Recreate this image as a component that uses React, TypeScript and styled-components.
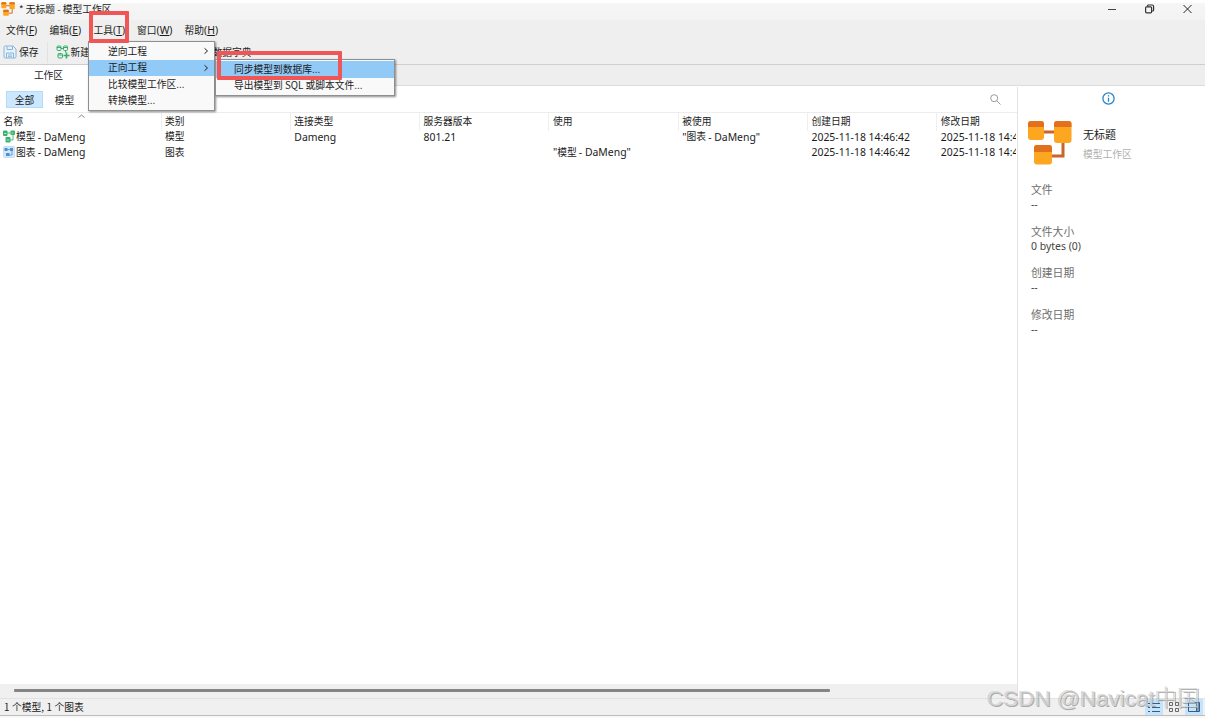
import React from "react";
import styled, { createGlobalStyle } from "styled-components";

const Global = createGlobalStyle`
  * { box-sizing: border-box; }
  html, body { margin: 0; padding: 0; overflow: hidden; background: #fff; }
  body {
    font-family: "Noto Sans CJK SC", "Noto Sans", sans-serif;
    font-size: 9.75px;
    color: #1c1c1c;
    white-space: nowrap;
  }
`;

const Latin = styled.span`
  font-family: "Noto Sans", sans-serif;
  font-size: 1.07em;
  line-height: 1;
`;

/* Sets western runs in the western face, beside the Chinese one. */
function Mixed({ text }: { text: string }) {
  return (
    <>
      {text.split(/([\x21-\x7e][\x20-\x7e]*)/).map((run, i) =>
        i % 2 ? <Latin key={i}>{run}</Latin> : run
      )}
    </>
  );
}

const Window = styled.div`
  position: relative;
  width: 1205px;
  height: 718px;
  display: flex;
  flex-direction: column;
  overflow: hidden;
  background: #fff;
`;

const TitleBar = styled.header`
  flex: none;
  height: 20px;
  padding: 0 0 2px 1px;
  display: flex;
  align-items: center;
  background: linear-gradient(#fff 0, #fff 2px, #f5f5f5 4px, #f3f3f3 100%);
  svg { flex: none; }
`;
const Title = styled.span`
  margin-left: 4px;
  line-height: 18px;
  padding-bottom: 1px;
`;
const WindowButtons = styled.div`
  margin-left: auto;
  height: 18px;
  display: flex;
  align-items: center;
  gap: 27px;
  padding-right: 12px;
`;

const MenuBar = styled.nav`
  flex: none;
  height: 21px;
  padding: 1px 0 0 6px;
  display: flex;
  background: #efefef;
  line-height: 19px;
`;
const MenuName = styled.span<{ $w: number }>`
  width: ${(p) => p.$w}px;
  u { text-underline-offset: 1px; text-decoration-thickness: 1px; }
`;

const Toolbar = styled.div`
  flex: none;
  height: 24px;
  padding: 0 0 1px 3px;
  display: flex;
  align-items: center;
  background: #efefef;
  border-bottom: 1px solid #cfcfcf;
  line-height: 22px;
  svg { flex: none; }
`;
const ToolText = styled.span<{ $gap: number }>`
  margin-left: ${(p) => p.$gap}px;
`;
const ToolDivider = styled.i`
  width: 1px;
  height: 21px;
  margin: 0 8px;
  background: #e2e2e2;
`;

const TabStrip = styled.div`
  flex: none;
  height: 21px;
  background: #eee;
  border-bottom: 1px solid #dcdcdc;
`;
const Tab = styled.div`
  width: 97px;
  height: 21px;
  background: #fff;
  text-align: center;
  line-height: 20px;
`;

const Body = styled.div`
  flex: 1;
  min-height: 0;
  display: flex;
`;
const Main = styled.main`
  width: 1017px;
  display: flex;
  flex-direction: column;
`;
const FilterRow = styled.div`
  flex: none;
  height: 27px;
  padding: 1px 16px 0 6px;
  display: flex;
  align-items: center;
  border-bottom: 1px solid #ededed;
`;
const Filter = styled.span<{ $on?: boolean }>`
  width: ${(p) => (p.$on ? 37 : 43)}px;
  height: 17px;
  line-height: 16px;
  text-align: center;
  border: 1px solid ${(p) => (p.$on ? "#b5dcf7" : "transparent")};
  background: ${(p) => (p.$on ? "#cce8ff" : "transparent")};
`;
const SearchIcon = styled.svg`
  margin-left: auto;
`;

const Table = styled.div`
  flex: 1;
  position: relative;
  overflow: hidden;
  margin-right: 1px;
`;
const Row = styled.div<{ $head?: boolean }>`
  display: grid;
  grid-template-columns: 161.5px repeat(7, 129.3px);
  height: ${(p) => (p.$head ? 16 : 15.5)}px;
  line-height: ${(p) => (p.$head ? 17.5 : 15)}px;
`;
const Cell = styled.div<{ $head?: boolean }>`
  height: 100%;
  padding-left: 3.5px;
  display: flex;
  align-items: center;
  white-space: pre;
  border-right: 1px solid ${(p) => (p.$head ? "#efefef" : "transparent")};
`;
const NameCell = styled(Cell)`
  padding-left: 3px;
  svg { flex: none; margin-right: 1px; }
`;
const SortMark = styled.svg`
  position: absolute;
  left: 78px;
  top: 1px;
`;

const ScrollTrack = styled.div`
  flex: none;
  height: 14px;
  padding: 5px 0 0 14px;
  background: #f0f0f0;
`;
const ScrollThumb = styled.div`
  width: 816px;
  height: 3px;
  border-radius: 1px;
  background: #858585;
`;

const Side = styled.aside`
  flex: 1;
  margin-top: 1px;
  border-left: 1px solid #e3e3e3;
  padding: 5px 0 0 9px;
`;
const InfoIcon = styled.svg`
  display: block;
  margin: 0 0 0 75px;
`;
const Summary = styled.div`
  margin-top: 15px;
  display: flex;
`;
const SummaryText = styled.div`
  margin: 4px 0 0 11px;
`;
const SummaryName = styled.div`
  font-size: 11px;
  line-height: 20px;
  color: #222;
`;
const SummaryKind = styled.div`
  line-height: 20px;
  color: #b0b0b0;
`;
const Details = styled.dl`
  margin: 16px 0 0 4px;
  font-size: 10.8px;
  dt { height: 16px; line-height: 16px; color: #6d6d6d; }
  dd { height: 14px; margin: 0 0 11.6px; line-height: 15px; color: #444; font-size: 9.8px; }
`;

const StatusBar = styled.footer`
  flex: none;
  height: 18px;
  padding: 0 2px 0 4px;
  display: flex;
  align-items: center;
  background: #f0f0f0;
  border-top: 1px solid #e2e2e2;
  border-bottom: 1px solid #bdbdbd;
  line-height: 16px;
`;
const StatusText = styled.span`
  word-spacing: 0.4px;
`;
const BottomEdge = styled.div`
  flex: none;
  height: 2px;
  background: #f8f8f8;
`;
const ViewButtons = styled.div`
  margin-left: auto;
  display: flex;
  gap: 2px;
`;
const ViewButton = styled.span<{ $on?: boolean }>`
  width: 18px;
  height: 16px;
  display: flex;
  align-items: center;
  justify-content: center;
  background: ${(p) => (p.$on ? "#c5e4fb" : "transparent")};
`;

const Popup = styled.div<{ $x: number; $y: number; $w: number }>`
  position: absolute;
  left: ${(p) => p.$x}px;
  top: ${(p) => p.$y}px;
  width: ${(p) => p.$w}px;
  padding: 1px 0;
  background: #f9f9f9;
  border: 1px solid #8f8f8f;
  box-shadow: 1px 1px 2px rgba(0, 0, 0, 0.45);
`;
const PopupItem = styled.div<{ $on?: boolean; $indent: number }>`
  height: 16.5px;
  line-height: 15.5px;
  padding: 0 5px 0 ${(p) => p.$indent}px;
  display: flex;
  align-items: center;
  justify-content: space-between;
  background: ${(p) => (p.$on ? "#91c9f7" : "transparent")};
`;
const Highlight = styled.div<{ $x: number; $y: number; $w: number; $h: number }>`
  position: absolute;
  left: ${(p) => p.$x}px;
  top: ${(p) => p.$y}px;
  width: ${(p) => p.$w}px;
  height: ${(p) => p.$h}px;
  border: 4px solid #f05656;
  border-radius: 1px;
`;
const Watermark = styled.div`
  position: absolute;
  left: 987px;
  top: 685px;
  font-family: "Liberation Sans", "Noto Sans CJK SC", sans-serif;
  font-size: 22.5px;
  font-weight: 300;
  line-height: 27px;
  color: rgba(240, 240, 240, 0.6);
  text-shadow: 1px 1px 0 rgba(100, 100, 100, 0.5), -0.5px -0.5px 0 rgba(120, 120, 120, 0.4);
`;

function WorkspaceLogo({ size }: { size: number }) {
  return (
    <svg width={size} height={size} viewBox="0 0 45 45">
      <path d="M15 12h14M36 22v14H24" fill="none" stroke="#c9652b" strokeWidth="3" />
      <rect x="1" y="1" width="16" height="19" rx="3" fill="#fda61f" />
      <path d="M1 7V4a3 3 0 0 1 3-3h10a3 3 0 0 1 3 3v3z" fill="#e2701c" />
      <rect x="27" y="1" width="17.5" height="22" rx="3" fill="#fda61f" />
      <path d="M27 7V4a3 3 0 0 1 3-3h11.500a3 3 0 0 1 3 3v3z" fill="#e2701c" />
      <rect x="7" y="25" width="18" height="19.500" rx="3" fill="#fda61f" />
      <path d="M7 32v-4a3 3 0 0 1 3-3h12a3 3 0 0 1 3 3v4z" fill="#e2701c" />
    </svg>
  );
}

function ModelIcon() {
  return (
    <svg width="12" height="13" viewBox="0 0 12 13">
      <path d="M4 3h5M10 4v6H6" fill="none" stroke="#4dbb7c" />
      <rect x="0" y="0.500" width="4.500" height="5.500" rx="1" fill="#37b36b" />
      <rect x="7.500" y="0.500" width="4.500" height="4.500" rx="1" fill="#37b36b" />
      <rect x="2.500" y="7" width="5" height="5.500" rx="1" fill="#37b36b" />
      <path d="M1 3.500h2.500M8.500 3h2M3.500 10h3" stroke="#a5e6c1" />
    </svg>
  );
}

function DiagramIcon() {
  return (
    <svg width="12" height="12" viewBox="0 0 12 12">
      <rect x="0.500" y="0.500" width="11" height="11" rx="1" fill="#d3e8fa" stroke="#c5ddf2" />
      <path d="M4 3.500h3M9 4v5H6" fill="none" stroke="#64a1d9" />
      <rect x="1.500" y="2" width="3" height="3" fill="#4a90d0" />
      <rect x="7" y="2" width="3" height="3" fill="#4a90d0" />
      <rect x="3" y="7" width="3.500" height="3" fill="#4a90d0" />
    </svg>
  );
}

function SaveIcon() {
  return (
    <svg width="14" height="14" viewBox="0 0 14 14" fill="none" stroke="#8ab5da">
      <path d="M1 2.200Q1 1 2.200 1H10l3 3v7.800Q13 13 11.800 13H2.200Q1 13 1 11.800z" fill="#e6f2fb" />
      <path d="M4 1v3.500h5.500V1M3.500 13V8h7v5M5 10h4M5 11.700h4" />
    </svg>
  );
}

function NewModelIcon() {
  return (
    <svg width="14" height="14" viewBox="0 0 14 14" fill="none" stroke="#35ae67">
      <rect x="1" y="1" width="4" height="4.500" rx="1" />
      <rect x="7.500" y="1" width="4" height="4.500" rx="1" />
      <rect x="2" y="8.500" width="4.500" height="4.500" rx="1" />
      <path d="M1 2.500h4M7.500 2.500h4M2 10h4.500M5 3.500h2.500M9.500 5.500V7.500" />
      <path d="M10.500 7.500v6M7.500 10.500h6" strokeWidth="1.600" />
    </svg>
  );
}

const Chevron = () => (
  <svg width="6" height="8" viewBox="0 0 6 8" fill="none" stroke="#222">
    <path d="M1.500 1.300L4.500 4L1.500 6.700" />
  </svg>
);

const menus: [string, string, number][] = [
  ["文件", "F", 43.5],
  ["编辑", "E", 44],
  ["工具", "T", 43.5],
  ["窗口", "W", 47.5],
  ["帮助", "H", 45],
];
const columns = ["名称", "类别", "连接类型", "服务器版本", "使用", "被使用", "创建日期", "修改日期"];
const rows = [
  ["模型 - DaMeng", "模型", "Dameng", "801.21", "", '"图表 - DaMeng"', "2025-11-18 14:46:42", "2025-11-18 14:46:42"],
  ["图表 - DaMeng", "图表", "", "", '"模型 - DaMeng"', "", "2025-11-18 14:46:42", "2025-11-18 14:46:42"],
];
const details = [
  ["文件", "--"],
  ["文件大小", "0 bytes (0)"],
  ["创建日期", "--"],
  ["修改日期", "--"],
];

export default function App() {
  return (
    <Window>
      <Global />
      <TitleBar>
        <WorkspaceLogo size={14} />
        <Title>* 无标题 - 模型工作区</Title>
        <WindowButtons>
          <svg width="10" height="10" viewBox="0 0 10 10" stroke="#444">
            <path d="M0 5.500h8" />
          </svg>
          <svg width="10" height="10" viewBox="0 0 10 10" fill="none" stroke="#333" strokeWidth="1.200">
            <rect x="0.600" y="2.800" width="6" height="6" rx="1" />
            <path d="M2.600 2.500V2q0-1 1-1h3.500Q8.600 1 8.600 2.500V6q0 1-1 1h-.5" />
          </svg>
          <svg width="11" height="10" viewBox="0 0 11 10" stroke="#222">
            <path d="M1.500 1l8 8M9.500 1l-8 8" />
          </svg>
        </WindowButtons>
      </TitleBar>

      <MenuBar>
        {menus.map(([name, key, w]) => (
          <MenuName key={key} $w={w}>
            {name}
            <Latin>
              (<u>{key}</u>)
            </Latin>
          </MenuName>
        ))}
      </MenuBar>

      <Toolbar>
        <SaveIcon />
        <ToolText $gap={2}>保存</ToolText>
        <ToolDivider />
        <NewModelIcon />
        <ToolText $gap={1}>新建模型</ToolText>
        <ToolText $gap={103}>数据字典</ToolText>
      </Toolbar>

      <TabStrip>
        <Tab>工作区</Tab>
      </TabStrip>

      <Body>
        <Main>
          <FilterRow>
            <Filter $on>全部</Filter>
            <Filter>模型</Filter>
            <SearchIcon width="11" height="11" viewBox="0 0 11 11" fill="none" stroke="#999">
              <circle cx="4.200" cy="4.200" r="3.500" />
              <path d="M6.800 6.800l3.700 3.700" />
            </SearchIcon>
          </FilterRow>
          <Table>
            <Row $head>
              {columns.map((c) => (
                <Cell key={c} $head>
                  {c}
                </Cell>
              ))}
            </Row>
            <SortMark width="7" height="4" viewBox="0 0 7 4" fill="none" stroke="#888">
              <path d="M.5 3.500l3-2.500l3 2.500" />
            </SortMark>
            {rows.map(([name, ...rest], i) => (
              <Row key={name}>
                <NameCell>
                  {i === 0 ? <ModelIcon /> : <DiagramIcon />}
                  <Mixed text={name} />
                </NameCell>
                {rest.map((v, j) => (
                  <Cell key={j}>
                    <Mixed text={v} />
                  </Cell>
                ))}
              </Row>
            ))}
          </Table>
          <ScrollTrack>
            <ScrollThumb />
          </ScrollTrack>
        </Main>
        <Side>
          <InfoIcon width="13" height="13" viewBox="0 0 13 13" fill="none" stroke="#2484cf" strokeWidth="1.300">
            <circle cx="6.500" cy="6.500" r="5.600" />
            <path d="M6.500 5.700v4M6.500 3.300v1.300" />
          </InfoIcon>
          <Summary>
            <WorkspaceLogo size={45} />
            <SummaryText>
              <SummaryName>无标题</SummaryName>
              <SummaryKind>模型工作区</SummaryKind>
            </SummaryText>
          </Summary>
          <Details>
            {details.map(([k, v]) => (
              <React.Fragment key={k}>
                <dt>{k}</dt>
                <dd>
                  <Mixed text={v} />
                </dd>
              </React.Fragment>
            ))}
          </Details>
        </Side>
      </Body>

      <StatusBar>
        <StatusText>1 个模型, 1 个图表</StatusText>
        <ViewButtons>
          <ViewButton $on>
            <svg width="12" height="12" viewBox="0 0 12 12" stroke="#315f86">
              <path d="M0 2.500h2M0 6.500h2M0 10.500h2M4 2.500h8M4 6.500h8M4 10.500h8" />
            </svg>
          </ViewButton>
          <ViewButton>
            <svg width="12" height="12" viewBox="0 0 12 12" fill="none" stroke="#666">
              <path d="M1.500 1.500h3v3h-3zM7.500 1.500h3v3h-3zM1.500 7.500h3v3h-3zM7.500 7.500h3v3h-3z" />
            </svg>
          </ViewButton>
          <ViewButton $on>
            <svg width="12" height="12" viewBox="0 0 12 12" fill="none" stroke="#315f86">
              <path d="M.5 1.500h11v9H.5zM8.500 1.500v9M10 1.500v9" />
            </svg>
          </ViewButton>
        </ViewButtons>
      </StatusBar>
      <BottomEdge />

      <Popup $x={88} $y={41} $w={127}>
        <PopupItem $indent={19}>
          逆向工程
          <Chevron />
        </PopupItem>
        <PopupItem $indent={19} $on>
          正向工程
          <Chevron />
        </PopupItem>
        <PopupItem $indent={19}>比较模型工作区...</PopupItem>
        <PopupItem $indent={19}>转换模型...</PopupItem>
      </Popup>
      <Popup $x={215} $y={59} $w={180}>
        <PopupItem $indent={18} $on>
          同步模型到数据库...
        </PopupItem>
        <PopupItem $indent={18}>导出模型到 SQL 或脚本文件...</PopupItem>
      </Popup>

      <Highlight $x={89} $y={11} $w={40} $h={32} />
      <Highlight $x={217} $y={51} $w={125} $h={29} />
      <Watermark>CSDN @Navicat中国</Watermark>
    </Window>
  );
}
